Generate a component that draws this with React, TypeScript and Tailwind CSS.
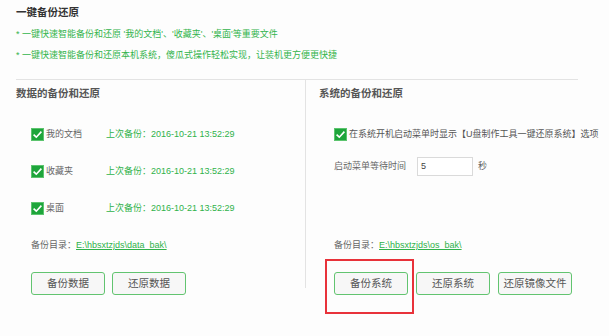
import React from "react";

const FONT = { fontFamily: '"Liberation Sans", "Noto Sans CJK SC", sans-serif' };

function Check() {
  return (
    <svg width="13" height="13" viewBox="0 0 13 13" className="shrink-0">
      <rect x="0" y="0" width="13" height="13" fill="#1ea53b" />
      <rect x="0.5" y="0.5" width="12" height="12" fill="none" stroke="#5cc46e" strokeWidth="1" />
      <path d="M2.6 6.6 L5.3 9.2 L10.4 3.6" fill="none" stroke="#ffffff" strokeWidth="1.6" />
    </svg>
  );
}

function Btn({ children, w = "w-[74px]" }: { children: React.ReactNode; w?: string }) {
  return (
    <div
      className={`${w} h-[23px] shrink-0 flex items-center justify-center rounded-[3px] border border-[#62c470] bg-[#f7f7f7] text-[10.5px] text-[#555]`}
    >
      {children}
    </div>
  );
}

function Row({ label }: { label: string }) {
  return (
    <div className="flex items-center h-[13px]">
      <div className="w-[75px] flex items-center gap-[2px]">
        <Check />
        <span className="text-[9px] text-[#666] leading-[13px]">{label}</span>
      </div>
      <span className="text-[9px] text-[#2fb24a] leading-[13px]">上次备份：2016-10-21 13:52:29</span>
    </div>
  );
}

export default function App() {
  return (
    <div className="w-[609px] h-[336px] bg-[#fdfdfd] overflow-hidden" style={FONT}>
      <div className="pl-[16px] pt-[5px]">
        <div className="h-[14px] leading-[14px] text-[10.5px] font-bold text-[#333]">一键备份还原</div>
        <div className="mt-[8px] h-[14px] leading-[14px] text-[9px] text-[#33b44c]">
          * 一键快速智能备份和还原 '我的文档'、'收藏夹'、'桌面'等重要文件
        </div>
        <div className="mt-[7px] h-[14px] leading-[14px] text-[9px] text-[#33b44c]">
          * 一键快速智能备份和还原本机系统，傻瓜式操作轻松实现，让装机更方便更快捷
        </div>
      </div>
      <div className="ml-[16px] mt-[17px] w-[562px] h-px bg-[#e3e3e3]" />
      <div className="flex">
        {/* left */}
        <div className="ml-[16px] w-[289px] flex flex-col">
          <div className="mt-[6px] h-[14px] leading-[14px] text-[10.5px] font-bold text-[#555]">数据的备份和还原</div>
          <div className="pl-[15px] mt-[28px] flex flex-col gap-[24px]">
            <Row label="我的文档" />
            <Row label="收藏夹" />
            <Row label="桌面" />
          </div>
          <div className="pl-[15px] mt-[24px] h-[12px] flex items-center text-[9px] leading-[12px]">
            <span className="text-[#666]">备份目录：</span>
            <span className="text-[#2fb24a] underline">E:\hbsxtzjds\data_bak\</span>
          </div>
          <div className="pl-[15px] mt-[21px] flex gap-[7px]">
            <Btn>备份数据</Btn>
            <Btn>还原数据</Btn>
          </div>
        </div>
        {/* right */}
        <div className="h-[208px] border-l border-[#e3e3e3] pl-[13px] flex-1 flex flex-col">
          <div className="mt-[6px] h-[14px] leading-[14px] text-[10.5px] font-bold text-[#555]">系统的备份和还原</div>
          <div className="pl-[15px] mt-[28px] flex items-center gap-[2px] h-[13px]">
            <Check />
            <span className="text-[9px] text-[#555] leading-[13px] whitespace-nowrap">
              在系统开机启动菜单时显示【U盘制作工具一键还原系统】选项
            </span>
          </div>
          <div className="pl-[15px] mt-[16px] flex items-center h-[19px] text-[9px] text-[#666]">
            <span className="w-[83px]">启动菜单等待时间</span>
            <div className="w-[56px] h-[19px] border border-[#dadada] bg-white flex items-center pl-[3px] text-[#444]">5</div>
            <span className="ml-[5px]">秒</span>
          </div>
          <div className="pl-[15px] mt-[63px] h-[12px] flex items-center text-[9px] leading-[12px]">
            <span className="text-[#666]">备份目录：</span>
            <span className="text-[#2fb24a] underline">E:\hbsxtzjds\os_bak\</span>
          </div>
          <div className="pl-[15px] mt-[21px] flex gap-[8px]">
            <div className="relative">
              <Btn>备份系统</Btn>
              <div className="absolute left-[-9px] top-[-13px] w-[89px] h-[55px] border-2 border-[#e8323a]" />
            </div>
            <Btn>还原系统</Btn>
            <Btn>还原镜像文件</Btn>
          </div>
        </div>
      </div>
    </div>
  );
}
